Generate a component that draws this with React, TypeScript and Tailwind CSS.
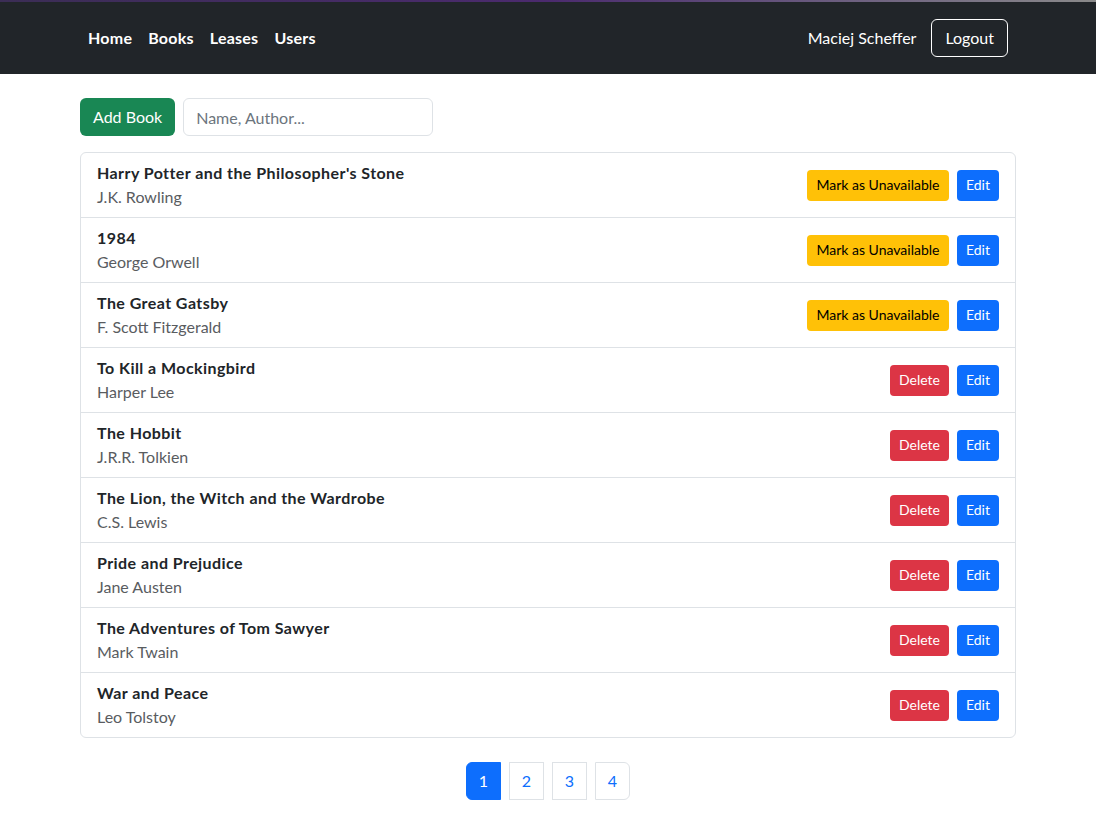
import { useState } from 'react';

interface Book {
  title: string;
  author: string;
  leased: boolean;
}

const BOOKS: Book[] = [
  { title: "Harry Potter and the Philosopher's Stone", author: 'J.K. Rowling', leased: true },
  { title: '1984', author: 'George Orwell', leased: true },
  { title: 'The Great Gatsby', author: 'F. Scott Fitzgerald', leased: true },
  { title: 'To Kill a Mockingbird', author: 'Harper Lee', leased: false },
  { title: 'The Hobbit', author: 'J.R.R. Tolkien', leased: false },
  { title: 'The Lion, the Witch and the Wardrobe', author: 'C.S. Lewis', leased: false },
  { title: 'Pride and Prejudice', author: 'Jane Austen', leased: false },
  { title: 'The Adventures of Tom Sawyer', author: 'Mark Twain', leased: false },
  { title: 'War and Peace', author: 'Leo Tolstoy', leased: false },
];

const PAGES = [1, 2, 3, 4];

export default function App() {
  const [query, setQuery] = useState('');
  const [page, setPage] = useState(1);

  return (
    <div className="min-h-screen bg-white text-[#212529] font-['Lato','Liberation_Sans',sans-serif]">
      {/* top strip */}
      <div className="h-[2px] bg-gradient-to-r from-[#3b2d55] via-[#4b2a6e] to-[#8a8a8a]" />

      {/* Navbar */}
      <nav className="bg-[#212529] h-[72px]">
        <div className="max-w-[960px] mx-auto px-3 h-full flex items-center justify-between">
          <div className="flex items-center">
            {['Home', 'Books', 'Leases', 'Users'].map((l) => (
              <a key={l} href="#" className="px-2 text-white font-bold text-base tracking-[0.015em]">
                {l}
              </a>
            ))}
          </div>
          <div className="flex items-center gap-[15px] pr-2">
            <span className="text-white text-base">Maciej Scheffer</span>
            <button className="h-[38px] px-[13px] border border-white rounded-md text-white text-base">
              Logout
            </button>
          </div>
        </div>
      </nav>

      <div className="max-w-[960px] mx-auto px-3">
        {/* Toolbar */}
        <div className="flex items-center gap-2 mt-6">
          <button className="h-[38px] px-[13px] bg-[#198754] text-white rounded-md text-base">
            Add Book
          </button>
          <input
            value={query}
            onChange={(e) => setQuery(e.target.value)}
            placeholder="Name, Author..."
            className="h-[38px] w-[250px] px-3 border border-[#dee2e6] rounded-md text-base placeholder:text-[#6c757d] outline-none"
          />
        </div>

        {/* Book list */}
        <div className="mt-4 border border-[#dee2e6] rounded-md">
          {BOOKS.map((book, i) => (
            <div
              key={book.title}
              className={`flex items-center justify-between px-4 py-2 ${i > 0 ? 'border-t border-[#dee2e6]' : ''}`}
            >
              <div>
                <div className="font-bold leading-6 tracking-[0.027em]">{book.title}</div>
                <div className="text-[#595c5f] leading-6">{book.author}</div>
              </div>
              <div className="flex items-center gap-2">
                {book.leased ? (
                  <button className="h-[31px] px-[9.5px] bg-[#ffc107] text-black text-sm rounded">
                    Mark as Unavailable
                  </button>
                ) : (
                  <button className="h-[31px] px-[9px] bg-[#dc3545] text-white text-sm rounded">
                    Delete
                  </button>
                )}
                <button className="h-[31px] px-[9px] bg-[#0d6efd] text-white text-sm rounded">
                  Edit
                </button>
              </div>
            </div>
          ))}
        </div>

        {/* Pagination */}
        <div className="flex justify-center gap-2 mt-6">
          {PAGES.map((p, i) => (
            <button
              key={p}
              onClick={() => setPage(p)}
              className={`h-[38px] w-[35px] text-base border ${
                page === p ? 'bg-[#0d6efd] border-[#0d6efd] text-white' : 'border-[#dee2e6] text-[#0d6efd]'
              } ${i === 0 ? 'rounded-l-md' : ''} ${i === PAGES.length - 1 ? 'rounded-r-md' : ''}`}
            >
              {p}
            </button>
          ))}
        </div>
      </div>
    </div>
  );
}
